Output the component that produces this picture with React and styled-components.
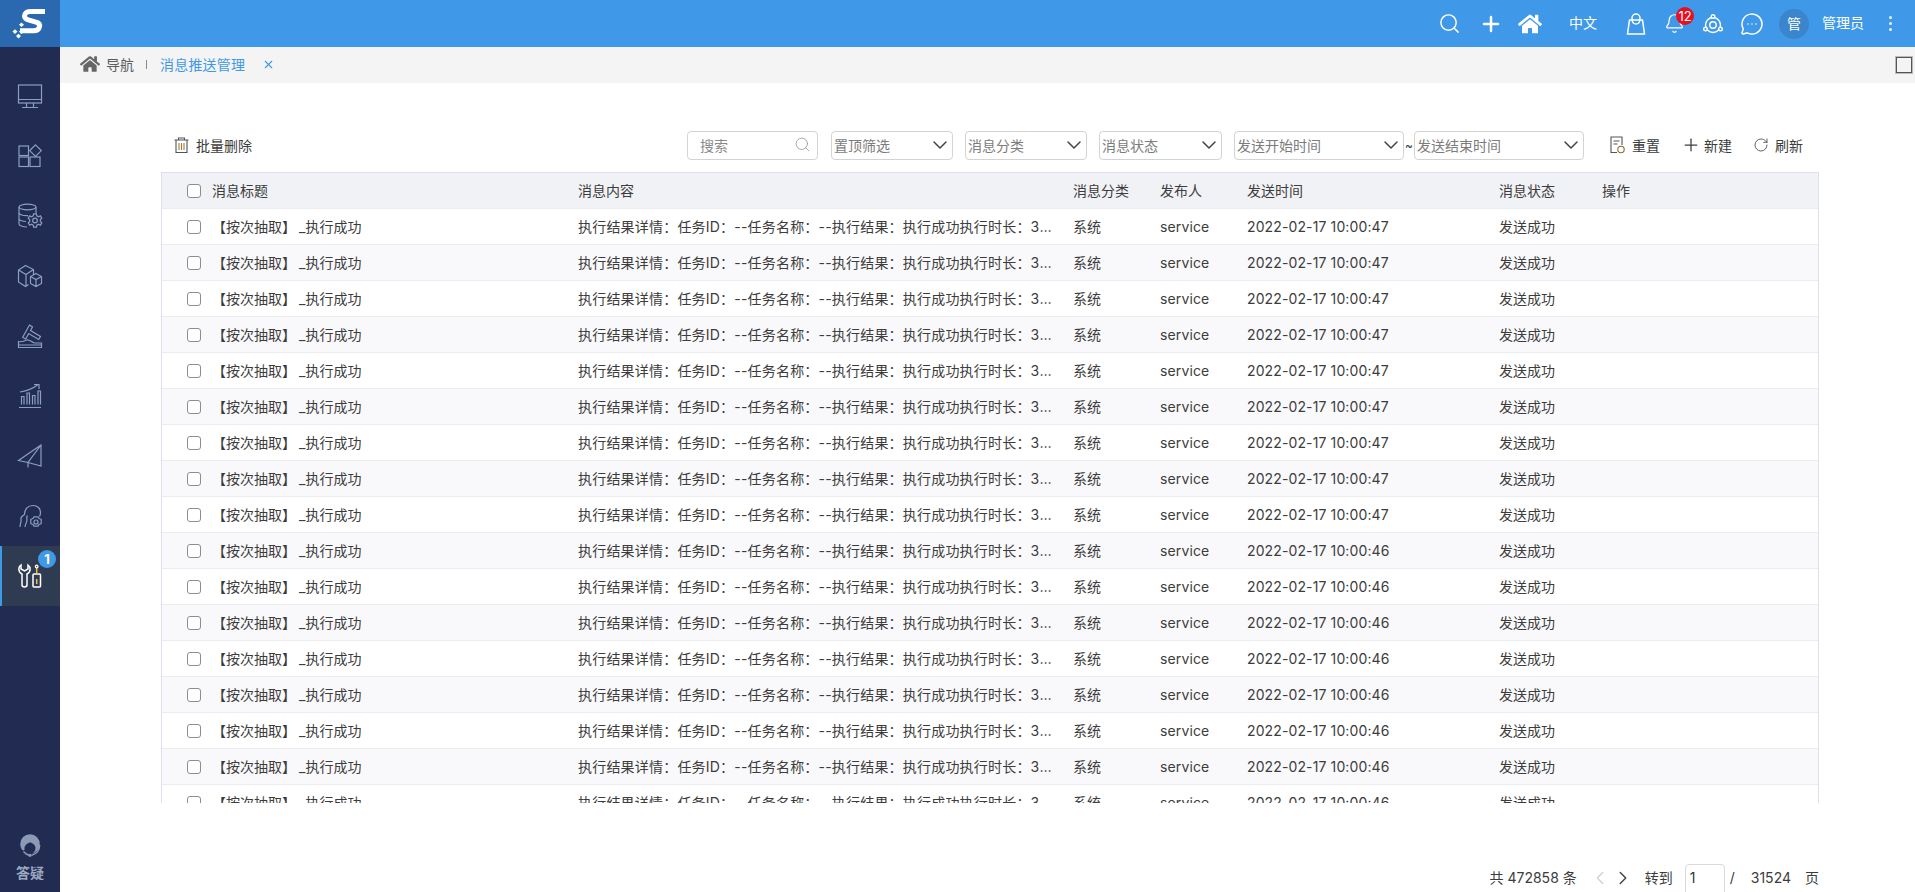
import React from 'react';
import styled, { createGlobalStyle } from 'styled-components';
import { FaHome } from 'react-icons/fa';
import { ChevronDown, ChevronLeft, ChevronRight, MessageCircleMore, Plus, RotateCw, Search, Bell, X } from 'lucide-react';

const BLUE = '#3f99e8';
const NAVY = '#222b52';
const TEXT = '#3c3c3c';

const GlobalStyle = createGlobalStyle`
  html, body {
    margin: 0;
    height: 100%;
    overflow: hidden;
    background: #fff;
    font-family: Inter, "Noto Sans CJK SC", sans-serif;
    font-size: 14px;
    color: ${TEXT};
  }
  * { box-sizing: border-box; }
`;

const Page = styled.div`
  display: flex;
  width: 1915px;
  height: 892px;
  overflow: hidden;
`;

const Sidebar = styled.aside`
  display: flex;
  flex-direction: column;
  flex: 0 0 60px;
  background: ${NAVY};
`;

const LogoBox = styled.div`
  display: flex;
  height: 47px;
  background: #2a69b0;
`;

const SideList = styled.nav`
  display: flex;
  flex-direction: column;
  flex: 1;
  padding-top: 19px;
`;

const SideItem = styled.div`
  position: relative;
  display: flex;
  align-items: center;
  justify-content: center;
  height: 60px;
  color: ${({ $active }) => ($active ? '#fff' : '#8ba0c0')};
  background: ${({ $active }) => ($active ? '#2e3b50' : 'transparent')};
  border-left: 2px solid ${({ $active }) => ($active ? BLUE : 'transparent')};
  padding-right: 2px;
`;

const SideBadge = styled.span`
  position: absolute;
  top: 4px;
  right: 4px;
  width: 18px;
  height: 18px;
  border-radius: 50%;
  background: ${BLUE};
  color: #fff;
  font-size: 13px;
  font-weight: 700;
  line-height: 18px;
  text-align: center;
`;

const HelpBlock = styled.div`
  display: flex;
  flex-direction: column;
  align-items: center;
  gap: 5px;
  padding-bottom: 9px;
  color: #9aa7c0;
  font-size: 14px;
  font-weight: 700;
  line-height: 20px;
`;

const Main = styled.div`
  display: flex;
  flex-direction: column;
  flex: 1;
  min-width: 0;
`;

const TopBar = styled.header`
  display: flex;
  align-items: center;
  justify-content: flex-end;
  flex: 0 0 47px;
  background: ${BLUE};
  color: #fff;
`;

const TopIcon = styled.span`
  position: relative;
  display: flex;
  align-items: center;
  justify-content: center;
  width: ${({ $w }) => $w || 24}px;
  margin-right: ${({ $gap }) => $gap || 0}px;
`;

const TopText = styled.span`
  margin-right: ${({ $gap }) => $gap || 0}px;
  padding-bottom: 1px;
  line-height: 20px;
`;

const BellBadge = styled.span`
  position: absolute;
  top: -6px;
  left: 14px;
  width: 18px;
  height: 18px;
  border-radius: 50%;
  background: #e8101f;
  font-size: 13px;
  line-height: 18px;
  text-align: center;
`;

const Avatar = styled.span`
  width: 30px;
  height: 30px;
  margin-right: 13px;
  border-radius: 50%;
  background: #3a85cb;
  line-height: 30px;
  text-align: center;
`;

const Dots = styled.span`
  display: flex;
  flex-direction: column;
  gap: 3px;
  margin-right: 23px;
  margin-left: 25px;

  i {
    width: 3px;
    height: 3px;
    border-radius: 50%;
    background: #e4f2ff;
  }
`;

const TabBar = styled.div`
  display: flex;
  align-items: center;
  flex: 0 0 36px;
  padding: 0 0 2px 20px;
  background: #f4f4f4;
  color: #5c5c5c;
`;

const TabHome = styled.span`
  display: flex;
  margin-right: 6px;
  color: #666;
`;

const TabSep = styled.span`
  width: 1px;
  height: 9px;
  margin: 0 13px 0 12px;
  background: #888;
`;

const TabName = styled.span`
  color: ${BLUE};
  margin-right: 17px;
  letter-spacing: 0.2px;
`;

const TabClose = styled.span`
  display: flex;
  color: ${BLUE};
`;

const WindowBox = styled.span`
  width: 16px;
  height: 16px;
  margin: 2px 3px 0 auto;
  border: 1px solid #555;
  outline: 1px solid #bbb;
`;

const Content = styled.main`
  display: flex;
  flex-direction: column;
  flex: 1;
  min-height: 0;
  padding: 48px 96px 0 101px;
`;

const Toolbar = styled.div`
  display: flex;
  align-items: center;
  flex: 0 0 29px;
  margin-bottom: 12px;
  padding: 0 16px 0 13px;
`;

const ToolAction = styled.span`
  display: flex;
  align-items: center;
  gap: ${({ $gap }) => $gap || 6}px;
  margin-left: ${({ $left }) => $left || 0}px;
  padding-bottom: 2px;
  color: ${TEXT};
  white-space: nowrap;
`;

const SearchBox = styled.div`
  display: flex;
  align-items: center;
  justify-content: space-between;
  width: 131px;
  height: 29px;
  margin-left: auto;
  padding: 0 6px 2px 12px;
  border: 1px solid #d3d3d3;
  border-radius: 4px;
  color: #8a8a8a;
`;

const FilterSelect = styled.div`
  display: flex;
  align-items: center;
  justify-content: space-between;
  width: ${({ $w }) => $w}px;
  height: 29px;
  margin-left: ${({ $left }) => $left}px;
  padding: 0 0 2px 2px;
  border: 1px solid #d3d3d3;
  border-radius: 4px;
  color: #7c7c7c;
  white-space: nowrap;

  svg { color: #444; }
`;

const Tilde = styled.span`
  width: 10px;
  font-size: 12px;
  text-align: center;
`;

const TableFrame = styled.div`
  flex: 0 0 631px;
  overflow: hidden;
  border-left: 1px solid #dfe0ef;
  border-right: 1px solid #dfe0ef;
  border-top: 1px solid #dfe0ef;
`;

const Row = styled.div`
  display: grid;
  grid-template-columns: 50px 366px 495px 87px 87px 252px 103px 1fr;
  align-items: center;
  height: 36px;
  background: ${({ $head, $even }) => ($head ? '#f1f2f5' : $even ? '#f9f9fb' : '#fff')};
  border-bottom: 1px solid #ececf0;
`;

const CheckCell = styled.span`
  padding-left: 25px;
  display: flex;
`;

const CheckBox = styled.span`
  width: 14px;
  height: 14px;
  border: 1px solid #8d8d8d;
  border-radius: 3px;
  background: #fff;
`;

const Cell = styled.span`
  padding: 0 18px 2px 0;
  overflow: hidden;
  white-space: nowrap;
  text-overflow: ellipsis;
  letter-spacing: ${({ $spaced }) => ($spaced ? '0.2px' : 'normal')};
`;

const TimeCell = styled(Cell)`
  padding-bottom: 0;
  letter-spacing: 0.12px;
`;

const Underscore = styled.span`
  padding-left: 3px;
`;

const Pager = styled.div`
  display: flex;
  align-items: flex-start;
  justify-content: flex-end;
  flex: 0 0 32px;
  margin-top: 61px;
`;

const PagerText = styled.span`
  margin-left: ${({ $left }) => $left || 0}px;
  line-height: 27px;
  white-space: nowrap;
`;

const PagerArrow = styled.span`
  display: flex;
  height: 27px;
  align-items: center;
  margin-left: ${({ $left }) => $left}px;
  color: ${({ $off }) => ($off ? '#cfcfcf' : '#444')};
`;

const PageInput = styled.span`
  width: 40px;
  height: 32px;
  margin-left: 12px;
  padding-left: 4px;
  border: 1px solid #d9d9d9;
  border-radius: 4px;
  line-height: 25px;
  color: #333;
`;

const Logo = () => (
  <svg width="60" height="47" viewBox="0 0 60 47">
    <path d="M45 11.500H30c-3.500 0-5.500 2-5.500 4.500 0 2.500 2 3.500 4.500 4.200l7 2c3 .8 4 2.300 3.500 4.500-.5 2.500-2.500 4-6 4H20" fill="none" stroke="#fff" strokeWidth="5" />
    <path d="M21.500 22.500l2.500 2.300-2.500 2.300-2.500-2.300zM15 29.300l2.500 2.300-2.500 2.300-2.500-2.300zM21.500 29.300l2.500 2.300-2.500 2.300-2.500-2.300zM18.500 33.800l2.500 2.300-2.500 2.300-2.500-2.300z" fill="#fff" />
  </svg>
);

const SideIcon = ({ children }) => (
  <svg width="26" height="26" viewBox="0 0 26 26" fill="none" stroke="currentColor" strokeWidth="1.2">
    {children}
  </svg>
);

const sideIcons = [
  <SideIcon key="monitor">
    <rect x="1.500" y="2" width="23" height="18" />
    <path d="M1.500 16.500h23M9.500 20v4M16.500 20v4M5 24.500h16" />
  </SideIcon>,
  <SideIcon key="apps">
    <rect x="2" y="3" width="9.500" height="9.500" />
    <path d="M18.500 1.800l5.800 5.800-5.800 5.800-5.800-5.800z" />
    <rect x="2" y="14" width="9.500" height="9.500" />
    <rect x="13" y="14" width="10" height="9.500" />
  </SideIcon>,
  <SideIcon key="db">
    <ellipse cx="10.500" cy="4" rx="8.500" ry="2.800" />
    <path d="M2 4v17c0 1.500 3.500 3 8 3M19 4v6M2 10c1 1.800 5 2.800 9 2.600M2 16c1 1.500 4 2.400 7 2.500" />
    <circle cx="18" cy="17.500" r="2.300" />
    <path d="M16.600 10.800h2.800l.4 2 1.800.9 1.800-1 1.400 2.400-1.500 1.400v2l1.500 1.400-1.400 2.400-1.800-1-1.800.9-.4 2h-2.800l-.4-2-1.800-.9-1.800 1-1.400-2.400 1.500-1.400v-2l-1.500-1.400 1.400-2.400 1.800 1 1.800-.9z" />
  </SideIcon>,
  <SideIcon key="boxes">
    <path d="M8.500 2.500l8 4v5.500M8.500 2.500L1.500 7v12l7 4.500 3-2M1.500 7l7.500 4.500 7.500-5M9 11.500v12" />
    <path d="M19 10.500l5.500 3v7L19 23.500l-5.500-3v-7zM13.500 13.500L19 16.500l5.500-3M19 16.500v7" />
  </SideIcon>,
  <SideIcon key="hammer">
    <path d="M12.500 2l3 2-2 3.500 10 6-1.800 3-10-6-3 5.500-3-1.700z" />
    <path d="M1.500 18.500c3 1 5.500-.5 8-1.500 3-1 5 2.500 8 3h7v4.500h-23zM1.500 22h23" />
  </SideIcon>,
  <SideIcon key="chart">
    <path d="M2 24.500h22M4.500 21.500v-8h2.500v8M10 21.500V10h2.500v11.500M15.500 21.500v-9H18v9M21 21.500V8h2.500v13.500" />
    <path d="M3 9c6-1 12-2.500 18-7.500M17 1.500h5V6" />
  </SideIcon>,
  <SideIcon key="plane">
    <path d="M24 2L1.500 17.500 11 19.500l13 3.500zM24 2L11 19.500v5" />
  </SideIcon>,
  <SideIcon key="head">
    <path d="M3 24c0-3 1.500-5 1-7.500-.5-2 1-3.500 3.500-5 0-5 3-9 8.500-9 4.500 0 7.500 3 7.500 7 0 1.500-.5 3-1 4" />
    <path d="M8 24c0-2.500 2-5 2-7 0-2-1-3 .5-4.500" />
    <circle cx="19" cy="19" r="2" />
    <path d="M17 13.800h4l1 1.700 2.200.8v4.400l-2.200.8-1 1.700h-4l-1-1.700-2.200-.8v-4.400l2.200-.8z" />
  </SideIcon>,
  <SideIcon key="tools">
    <path d="M4 2C1 4 1 9 5 11v11c0 2.500 5 2.500 5 0V11c4-2 4-7 1-9v4L7.500 8 4 6z" strokeWidth="1.500" />
    <rect x="16" y="11" width="7.500" height="13" rx="1" strokeWidth="1.500" />
    <path d="M19.700 5v6M19.700 16v5" stroke="#f0c040" strokeWidth="1.500" />
    <circle cx="19.700" cy="3.500" r="1.300" strokeWidth="1.300" />
  </SideIcon>,
];

const HelpIcon = () => (
  <svg width="26" height="26" viewBox="0 0 24 24" fill="none">
    <path d="M12 2a9 9 0 0 0-9 9c0 2 .7 4 2 5.500 1 1 2 .5 2-.5-.5-3 1.500-5 5-6.500 3 1 5.500 3 5 6 0 2-1.500 3.500-3 4.500 3.500-1 7-4 7-8.500a9 9 0 0 0-9-9.500z" fill="#8d9ab6" />
    <path d="M6 18c1.500 2 3.500 3 5.500 3.500M21 12c0 4-2.500 8-7.500 9.500" stroke="#8d9ab6" strokeWidth="1.200" />
    <circle cx="12" cy="21.500" r="1.500" fill="#8d9ab6" />
  </svg>
);

const BagIcon = () => (
  <svg width="20" height="22" viewBox="0 0 20 22" fill="none" stroke="#fff" strokeWidth="1.500">
    <path d="M3.500 7h13l2 14H1.500z" />
    <path d="M6 7V5a4 4 0 0 1 8 0v2M6 7c.5 3 2 4 4 4s3.500-1 4-4" />
  </svg>
);

const TargetIcon = () => (
  <svg width="22" height="22" viewBox="0 0 22 22" fill="none" stroke="#fff" strokeWidth="1.400">
    <circle cx="11" cy="12" r="7.500" />
    <circle cx="11" cy="12" r="3.200" />
    <circle cx="11" cy="3.500" r="1.800" fill={BLUE} />
    <circle cx="3.500" cy="16" r="1.800" fill={BLUE} />
    <circle cx="18.500" cy="16" r="1.800" fill={BLUE} />
  </svg>
);

const TrashIcon = () => (
  <svg width="15" height="16" viewBox="0 0 15 16" fill="none" stroke="#4a5560" strokeWidth="1.100">
    <path d="M.500 3h14M4.500 3V1h6v2M2 3v12.500h11V3" />
    <path d="M5 6v7M7.500 6v7M10 6v7" stroke="#a8792f" />
  </svg>
);

const ResetIcon = () => (
  <svg width="15" height="18" viewBox="0 0 15 18" fill="none" stroke="#555" strokeWidth="1.100">
    <path d="M7 16.500H1V1h11v8M3.500 5h6M3.500 8h4" />
    <circle cx="11" cy="13.500" r="3.200" stroke="#8a6a30" />
  </svg>
);

const titleCols = ['消息标题', '消息内容', '消息分类', '发布人', '发送时间', '消息状态', '操作'];
const times = Array.from({ length: 17 }, (_, i) => (i < 9 ? '2022-02-17 10:00:47' : '2022-02-17 10:00:46'));
const filters = [
  { label: '置顶筛选', w: 122, left: 13 },
  { label: '消息分类', w: 122, left: 12 },
  { label: '消息状态', w: 123, left: 12 },
  { label: '发送开始时间', w: 170, left: 12 },
];

const App = () => (
  <Page>
    <GlobalStyle />
    <Sidebar>
      <LogoBox>
        <Logo />
      </LogoBox>
      <SideList>
        {sideIcons.map((icon, i) => (
          <SideItem key={i} $active={i === 8}>
            {icon}
            {i === 8 && <SideBadge>1</SideBadge>}
          </SideItem>
        ))}
      </SideList>
      <HelpBlock>
        <HelpIcon />
        答疑
      </HelpBlock>
    </Sidebar>
    <Main>
      <TopBar>
        <TopIcon $gap={18}><Search size={23} strokeWidth={1.5} /></TopIcon>
        <TopIcon $gap={15}><Plus size={24} strokeWidth={2.5} /></TopIcon>
        <TopIcon $gap={27}><FaHome size={24} /></TopIcon>
        <TopText $gap={27}>中文</TopText>
        <TopIcon $gap={14}><BagIcon /></TopIcon>
        <TopIcon $gap={15}>
          <Bell size={21} strokeWidth={1.4} />
          <BellBadge>12</BellBadge>
        </TopIcon>
        <TopIcon $gap={15}><TargetIcon /></TopIcon>
        <TopIcon $gap={15}><MessageCircleMore size={24} strokeWidth={1.5} /></TopIcon>
        <Avatar>管</Avatar>
        <TopText>管理员</TopText>
        <Dots><i /><i /><i /></Dots>
      </TopBar>
      <TabBar>
        <TabHome><FaHome size={20} /></TabHome>
        导航
        <TabSep />
        <TabName>消息推送管理</TabName>
        <TabClose><X size={13} /></TabClose>
        <WindowBox />
      </TabBar>
      <Content>
        <Toolbar>
          <ToolAction $gap={7}><TrashIcon />批量删除</ToolAction>
          <SearchBox>
            搜索
            <Search size={17} strokeWidth={1.2} color="#999" />
          </SearchBox>
          {filters.map((f) => (
            <FilterSelect key={f.label} $w={f.w} $left={f.left}>
              {f.label}
              <ChevronDown size={24} strokeWidth={1.5} />
            </FilterSelect>
          ))}
          <Tilde>~</Tilde>
          <FilterSelect $w={170} $left={0}>
            发送结束时间
            <ChevronDown size={24} strokeWidth={1.5} />
          </FilterSelect>
          <ToolAction $left={26} $gap={7}><ResetIcon />重置</ToolAction>
          <ToolAction $left={21} $gap={3}><Plus size={20} strokeWidth={1.5} />新建</ToolAction>
          <ToolAction $left={21} $gap={6}><RotateCw size={16} strokeWidth={1.2} />刷新</ToolAction>
        </Toolbar>
        <TableFrame>
          <Row $head>
            <CheckCell><CheckBox /></CheckCell>
            {titleCols.map((c) => <Cell key={c}>{c}</Cell>)}
          </Row>
          {times.map((time, i) => (
            <Row key={i} $even={i % 2 === 1}>
              <CheckCell><CheckBox /></CheckCell>
              <Cell>【按次抽取】<Underscore>_</Underscore>执行成功</Cell>
              <Cell $spaced>执行结果详情：任务ID：--任务名称：--执行结果：执行成功执行时长：3秒钟</Cell>
              <Cell>系统</Cell>
              <TimeCell>service</TimeCell>
              <TimeCell>{time}</TimeCell>
              <Cell>发送成功</Cell>
              <Cell />
            </Row>
          ))}
        </TableFrame>
        <Pager>
          <PagerText>共 472858 条</PagerText>
          <PagerArrow $left={12} $off><ChevronLeft size={22} strokeWidth={1.3} /></PagerArrow>
          <PagerArrow $left={1}><ChevronRight size={22} strokeWidth={1.6} /></PagerArrow>
          <PagerText $left={11}>转到</PagerText>
          <PageInput>1</PageInput>
          <PagerText $left={5}>/</PagerText>
          <PagerText $left={16}>31524</PagerText>
          <PagerText $left={14}>页</PagerText>
        </Pager>
      </Content>
    </Main>
  </Page>
);

export default App;
